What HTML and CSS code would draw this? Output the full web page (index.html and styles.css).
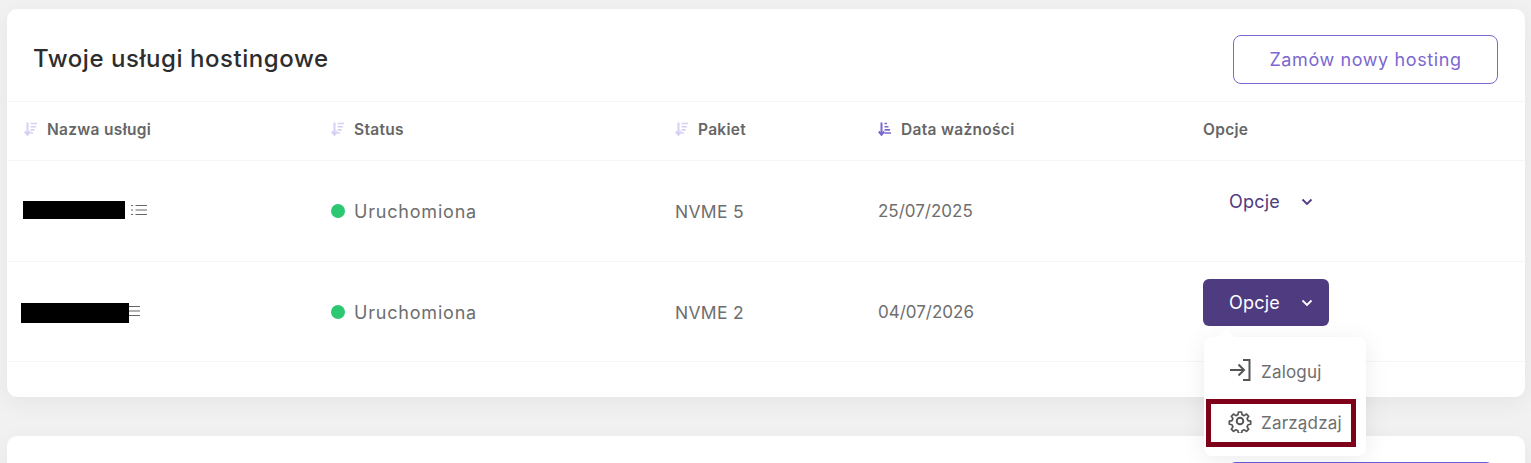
FILE: index.html
```html
<!DOCTYPE html>
<html lang="pl">
<head>
<meta charset="utf-8">
<title>Twoje usługi hostingowe</title>
<link rel="stylesheet" href="styles.css">
</head>
<body>
<svg class="defs" width="0" height="0" aria-hidden="true">
  <symbol id="sort" viewBox="0 0 13 14">
    <path d="M3.500 0.500v12M0.800 9.500l2.700 3.300 2.700-3.300" fill="none" stroke="currentColor" stroke-width="2"/>
    <path d="M6.500 1.500H13M6.500 4.700h5.500M6.500 7.900h4M6.500 11h2.500" fill="none" stroke="currentColor" stroke-width="1.600"/>
  </symbol>
  <symbol id="sort-active" viewBox="0 0 13 14">
    <path d="M3.500 0.500v12M0.800 9.500l2.700 3.300 2.700-3.300" fill="none" stroke="currentColor" stroke-width="2"/>
    <path d="M6.500 1.500h2.500M6.500 4.700h4M6.500 7.900h5.500M6.500 11H13" fill="none" stroke="currentColor" stroke-width="1.600"/>
  </symbol>
  <symbol id="list" viewBox="0 0 16 12">
    <path d="M4.500 1.500H16M4.500 6H16M4.500 10.500H16" fill="none" stroke="currentColor" stroke-width="1.200"/>
    <path d="M0 1.500h2M0 6h2M0 10.500h2" fill="none" stroke="currentColor" stroke-width="1.200"/>
  </symbol>
  <symbol id="chev" viewBox="0 0 12 8">
    <path d="M1.500 1.500L6 6l4.500-4.500" fill="none" stroke="currentColor" stroke-width="1.800"/>
  </symbol>
</svg>

<main class="page">
  <section class="card">
    <header class="card-head">
      <h1 class="title">Twoje usługi hostingowe</h1>
      <a class="btn-outline">Zamów nowy hosting</a>
    </header>

    <div class="row row-head">
      <div class="th"><svg class="sort"><use href="#sort"/></svg>Nazwa usługi</div>
      <div class="th"><svg class="sort"><use href="#sort"/></svg>Status</div>
      <div class="th"><svg class="sort"><use href="#sort"/></svg>Pakiet</div>
      <div class="th"><svg class="sort active"><use href="#sort-active"/></svg>Data ważności</div>
      <div class="th">Opcje</div>
    </div>

    <div class="row row-body">
      <div class="td name"><span class="redact redact-a"></span><svg class="list"><use href="#list"/></svg></div>
      <div class="td status"><span class="dot"></span>Uruchomiona</div>
      <div class="td plan">NVME 5</div>
      <div class="td">25/07/2025</div>
      <div class="td td-opt"><button class="opt">Opcje<svg class="chev"><use href="#chev"/></svg></button></div>
    </div>

    <div class="row row-body row-last">
      <div class="td name name-b"><span class="redact redact-b"></span><svg class="list list-b"><use href="#list"/></svg></div>
      <div class="td status"><span class="dot"></span>Uruchomiona</div>
      <div class="td plan">NVME 2</div>
      <div class="td">04/07/2026</div>
      <div class="td td-opt"><button class="opt opt-on">Opcje<svg class="chev"><use href="#chev"/></svg></button></div>
    </div>
  </section>

  <section class="card card-next">
    <a class="btn-fill"></a>
  </section>
</main>

<div class="menu">
  <span class="caret"></span>
  <a class="item">
    <svg class="item-icon login" viewBox="0 0 24 24"><path d="M2 12h14M10.500 6.500L16 12l-5.500 5.500M15 2h6.500v20H15" fill="none" stroke="currentColor" stroke-width="2"/></svg>
    Zaloguj
  </a>
  <a class="item item-mark">
    <svg class="item-icon gear" viewBox="0 0 24 24"><g fill="none" stroke="currentColor" stroke-width="1.900" stroke-linejoin="round"><circle cx="12" cy="12" r="3.300"/><path d="M10.300 2h3.400l.6 3 2.300 1 2.600-1.700 2.400 2.400-1.700 2.600 1 2.300 3 .6v3.400l-3 .6-1 2.300 1.700 2.600-2.400 2.400-2.600-1.700-2.300 1-.6 3h-3.400l-.6-3-2.300-1-2.600 1.700-2.400-2.400 1.700-2.600-1-2.300-3-.6v-3.400l3-.6 1-2.300L2.400 6.700l2.400-2.400 2.600 1.700 2.300-1z" transform="translate(1.200 1.200) scale(.9)"/></g></svg>
    Zarządzaj
  </a>
</div>
</body>
</html>
```

FILE: styles.css
```css
* { box-sizing: border-box; }
html, body { height: 100%; }
body {
  margin: 0;
  height: 463px;
  overflow: hidden;
  position: relative;
  background: #f1f1f1;
  color: #6a6a6a;
  font-family: "Inter", "Noto Sans", sans-serif;
}
.defs { position: absolute; }
.page { height: 463px; overflow: hidden; padding: 9px 6px 0 7px; }

.card {
  background: #fff;
  border-radius: 10px;
  height: 388px;
  box-shadow: 0 6px 24px rgba(0, 0, 0, .05);
}
.card-next {
  margin-top: 39px;
  height: 200px;
  display: flex;
  justify-content: flex-end;
  padding: 26px 31px 0 0;
}
.card-head {
  height: 93px;
  padding: 26px 27px 0 26px;
  display: flex;
  justify-content: space-between;
  align-items: flex-start;
  border-bottom: 1px solid #f5f5f5;
}
.title {
  margin: 0;
  font-size: 24px;
  line-height: 48px;
  font-weight: 500;
  color: #2d2d2d;
  letter-spacing: .55px;
}
.btn-outline {
  width: 265px;
  height: 49px;
  border: 1px solid #7b68d0;
  border-radius: 8px;
  color: #7b68d0;
  font-size: 18px;
  line-height: 48px;
  text-align: center;
  letter-spacing: .6px;
}
.btn-fill {
  width: 266px;
  height: 50px;
  border-radius: 8px;
  background: #6c5dd3;
}

.row {
  display: grid;
  grid-template-columns: 307px 344px 203px 325px 1fr;
  padding-left: 16px;
  margin-left: 1px;
  border-bottom: 1px solid #f5f5f5;
}
.row-head { height: 59px; align-items: center; padding-bottom: 4px; }
.row-body { height: 101px; align-items: center; }
.row-last { height: 100px; padding-top: 1px; }
.row-last .td-opt { padding-top: 16px; }
.th {
  display: flex;
  align-items: center;
  font-size: 15.500px;
  font-weight: 600;
  letter-spacing: .3px;
  color: #666;
}
.sort {
  width: 13px;
  height: 14px;
  margin-right: 10px;
  color: #d6d0f3;
}
.sort.active { color: #7b68d0; }

.td {
  display: flex;
  align-items: center;
  font-size: 17px;
  color: #6e6e6e;
}
.status { font-size: 18px; letter-spacing: .8px; }
.plan { font-size: 17.500px; letter-spacing: .3px; }
.name { height: 18px; margin-bottom: 2px; }
.name-b { margin: 1px 0 0; }
.redact { display: block; background: #000; position: relative; z-index: 1; }
.redact-a { width: 102px; height: 18px; margin-left: -1px; }
.redact-b { width: 108px; height: 20px; margin-left: -3px; }
.list { width: 16px; height: 12px; margin-left: 6px; color: #666; }
.list-b { margin: 0 0 3px -5px; }
.dot {
  width: 14px;
  height: 14px;
  margin-right: 9px;
  border-radius: 50%;
  background: #2bc871;
}
.td-opt { align-self: start; padding-top: 17px; }
.opt {
  width: 126px;
  height: 47px;
  padding: 0 0 0 26px;
  display: flex;
  align-items: center;
  border: 0;
  border-radius: 6px;
  background: transparent;
  color: #4f3b80;
  font: inherit;
  font-size: 18px;
  letter-spacing: .2px;
  cursor: pointer;
}
.opt-on { background: #4f3b80; color: #fff; }
.chev { width: 12px; height: 8px; margin-left: 21px; }

.menu {
  position: absolute;
  left: 1204px;
  top: 337px;
  width: 162px;
  height: 119px;
  background: #fff;
  border-radius: 8px;
  box-shadow: 0 4px 24px rgba(0, 0, 0, .08);
  padding-top: 11px;
}
.caret {
  position: absolute;
  left: 16px;
  top: -6px;
  width: 12px;
  height: 12px;
  background: #fff;
  transform: rotate(45deg);
}
.item {
  position: relative;
  height: 48px;
  display: flex;
  align-items: center;
  padding-left: 24px;
  font-size: 17px;
  letter-spacing: .2px;
  color: #6e6e6e;
}
.item-icon {
  width: 24px;
  height: 24px;
  margin-right: 9px;
  color: #555;
}
.login { margin-top: -4px; }
.gear { margin-top: -4px; }
.item-mark {
  width: 150px;
  margin: 3px 0 0 2px;
  padding-left: 17px;
  border: 5px solid #7f0019;
}
```
